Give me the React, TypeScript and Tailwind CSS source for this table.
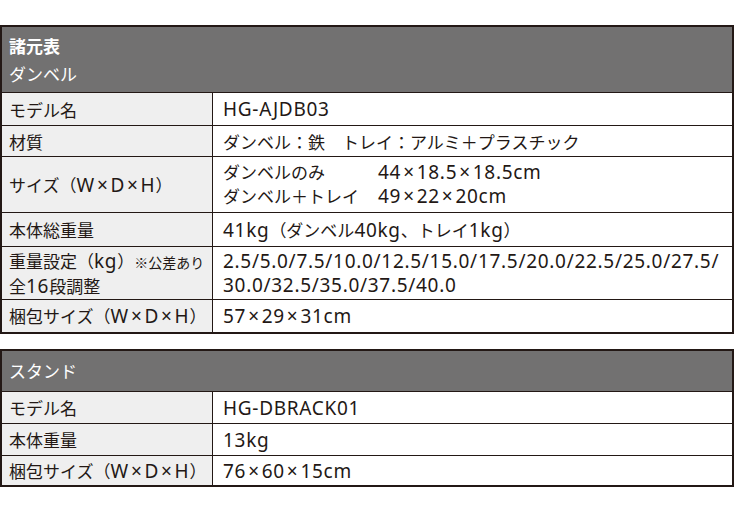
import type { ReactNode } from "react";

const latin = "font-['Noto_Sans',sans-serif] text-[19px] tracking-[0.7px]";

// latin runs are set a size up in Noto Sans, the CJK font's latin is too narrow
function L({ children }: { children: ReactNode }) {
  return <span className={latin}>{children}</span>;
}

// "57×29×31cm" style dimensions, × gets a little air on both sides
function Dim({ parts }: { parts: string[] }) {
  return (
    <>
      {parts.map((p, i) => (
        <span key={i}>
          {i > 0 && <span className={`${latin} mx-[2px]`}>×</span>}
          <span className={latin}>{p}</span>
        </span>
      ))}
    </>
  );
}

type Row = { label: ReactNode; value: ReactNode; h: string };

function SpecRow({ label, value, h }: Row) {
  return (
    <div className={`grid grid-cols-[211px_1fr] border-t border-[#231815] ${h}`}>
      <div className="bg-[#efefef] border-r border-[#231815] pl-[7px] flex items-center leading-[23px]">
        <div>{label}</div>
      </div>
      <div className="bg-white pl-[10px] flex items-center leading-[23px]">
        <div>{value}</div>
      </div>
    </div>
  );
}

function SpecTable({ header, rows }: { header: ReactNode; rows: Row[] }) {
  return (
    <div className="w-[734px] border-2 border-[#231815] text-[17px] text-[#231815]">
      <div className="bg-[#727171] text-white pl-[7px]">{header}</div>
      {rows.map((r, i) => (
        <SpecRow key={i} {...r} />
      ))}
    </div>
  );
}

const whd = <Dim parts={["W", "D", "H"]} />;

const packLabel = (
  <span className="whitespace-nowrap">
    梱包サイズ（{whd}）
  </span>
);

export default function App() {
  const dumbbell: Row[] = [
    { label: "モデル名", value: <L>HG-AJDB03</L>, h: "h-[33px]" },
    { label: "材質", value: "ダンベル：鉄　トレイ：アルミ＋プラスチック", h: "h-[31px]" },
    {
      label: <span className="whitespace-nowrap">サイズ（{whd}）</span>,
      h: "h-[56px]",
      value: (
        <div className="grid grid-cols-[155px_1fr] pb-[2px]">
          <span>ダンベルのみ</span>
          <span className="whitespace-nowrap">
            <Dim parts={["44", "18.5", "18.5cm"]} />
          </span>
          <span>ダンベル＋トレイ</span>
          <span className="whitespace-nowrap">
            <Dim parts={["49", "22", "20cm"]} />
          </span>
        </div>
      ),
    },
    {
      label: "本体総重量",
      value: (
        <>
          <L>41kg</L>（ダンベル<L>40kg</L>、トレイ<L>1kg</L>）
        </>
      ),
      h: "h-[34px]",
    },
    {
      label: (
        <>
          <div className="whitespace-nowrap">
            重量設定（<L>kg</L>）<span className="text-[14px]">※公差あり</span>
          </div>
          <div>
            全<L>16</L>段調整
          </div>
        </>
      ),
      h: "h-[53px]",
      value: (
        <>
          <div>
            <L>2.5/5.0/7.5/10.0/12.5/15.0/17.5/20.0/22.5/25.0/27.5/</L>
          </div>
          <div>
            <L>30.0/32.5/35.0/37.5/40.0</L>
          </div>
        </>
      ),
    },
    { label: packLabel, value: <Dim parts={["57", "29", "31cm"]} />, h: "h-[33px]" },
  ];

  const stand: Row[] = [
    { label: "モデル名", value: <L>HG-DBRACK01</L>, h: "h-[32px]" },
    { label: "本体重量", value: <L>13kg</L>, h: "h-[32px]" },
    { label: packLabel, value: <Dim parts={["76", "60", "15cm"]} />, h: "h-[30px]" },
  ];

  return (
    <div className="w-[735px] h-[515px] bg-white pt-[25px] font-['Noto_Sans_CJK_JP',sans-serif]">
      <SpecTable
        header={
          <div className="h-[65px] pt-[5px] leading-[28px]">
            <div className="font-bold">諸元表</div>
            <div>ダンベル</div>
          </div>
        }
        rows={dumbbell}
      />
      <div className="h-[15px]" />
      <SpecTable
        header={<div className="h-[40px] pt-[6px] leading-[28px]">スタンド</div>}
        rows={stand}
      />
    </div>
  );
}
